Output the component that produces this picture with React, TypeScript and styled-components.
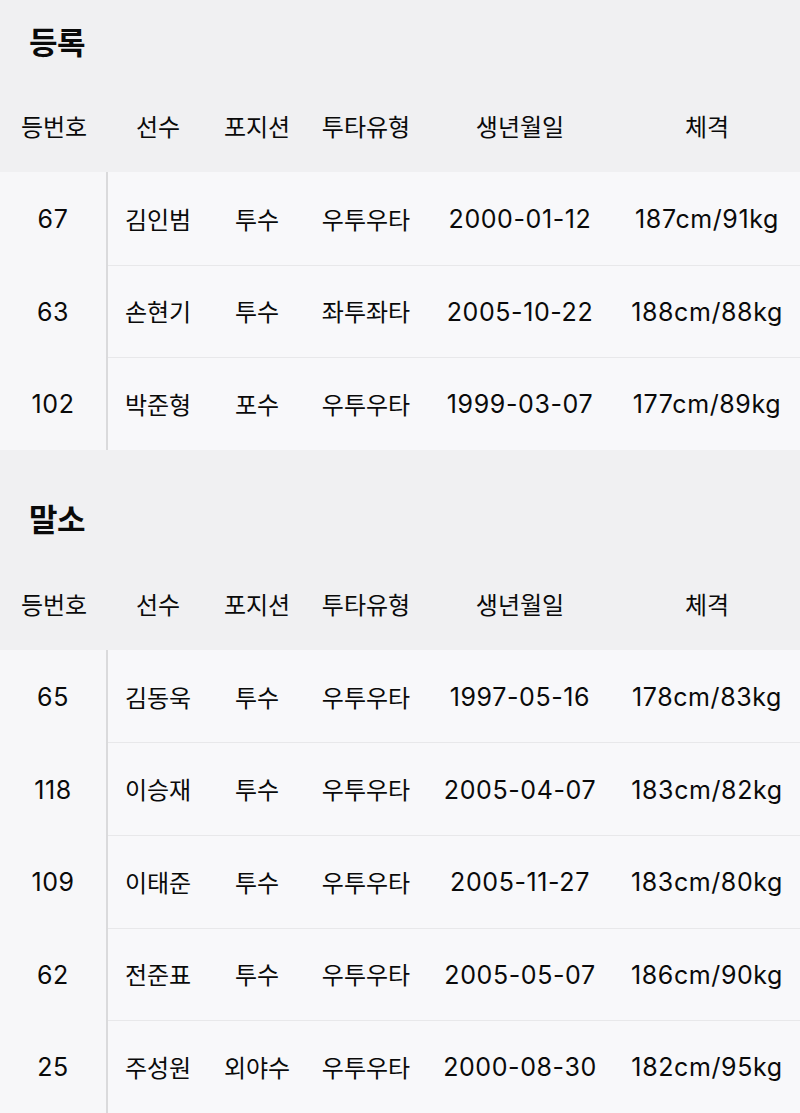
import styled, { createGlobalStyle } from 'styled-components';

const GlobalStyle = createGlobalStyle`
  html, body {
    margin: 0;
    padding: 0;
    background: #f0f0f2;
  }
  body {
    font-family: "Inter", "Noto Sans CJK KR", "Noto Sans", sans-serif;
    color: #0a0a0a;
  }
`;

const COLS = '108px 100px 98px 120px 188px 1fr';

const Section = styled.section<{ $top: number }>`
  background: #f0f0f2;
  padding-top: ${(p) => p.$top}px;
`;

const Title = styled.h2`
  margin: 0;
  height: 60px;
  display: flex;
  align-items: center;
  padding-left: 29px;
  font-size: 31px;
  font-weight: 700;
  letter-spacing: -0.5px;
`;

const HeadRow = styled.div`
  display: grid;
  grid-template-columns: ${COLS};
  box-sizing: border-box;
  height: 102px;
  padding-top: 9px;
  align-items: center;
`;

const HeadCell = styled.div`
  text-align: center;
  font-size: 24px;
  font-weight: 400;
`;

const Body = styled.div`
  background: #f8f8fa;
`;

const Row = styled.div`
  display: grid;
  grid-template-columns: ${COLS};
  height: 92.6px;
  align-items: stretch;
  & + & {
    box-shadow: inset 0 1px 0 #e8e8ea;
  }
`;

const Cell = styled.div<{ $num?: boolean; $latin?: boolean }>`
  display: flex;
  align-items: center;
  justify-content: center;
  font-size: ${(p) => (p.$latin ? '25px' : '24px')};
  font-weight: 400;
  letter-spacing: ${(p) => (p.$latin ? '0.6px' : '0')};
  padding-top: ${(p) => (p.$latin ? '2px' : '0')};
  ${(p) =>
    p.$num &&
    `
    border-right: 2px solid #dadadc;
    background: #f7f7f9;
  `}
`;

type Player = [string, string, string, string, string, string];

const registered: Player[] = [
  ['67', '김인범', '투수', '우투우타', '2000-01-12', '187cm/91kg'],
  ['63', '손현기', '투수', '좌투좌타', '2005-10-22', '188cm/88kg'],
  ['102', '박준형', '포수', '우투우타', '1999-03-07', '177cm/89kg'],
];

const released: Player[] = [
  ['65', '김동욱', '투수', '우투우타', '1997-05-16', '178cm/83kg'],
  ['118', '이승재', '투수', '우투우타', '2005-04-07', '183cm/82kg'],
  ['109', '이태준', '투수', '우투우타', '2005-11-27', '183cm/80kg'],
  ['62', '전준표', '투수', '우투우타', '2005-05-07', '186cm/90kg'],
  ['25', '주성원', '외야수', '우투우타', '2000-08-30', '182cm/95kg'],
];

const heads = ['등번호', '선수', '포지션', '투타유형', '생년월일', '체격'];
const latinCols = [0, 4, 5];

const RosterTable = ({ title, rows, top }: { title: string; rows: Player[]; top: number }) => (
  <>
    <Section $top={top}>
      <Title>{title}</Title>
      <HeadRow>
        {heads.map((h) => (
          <HeadCell key={h}>{h}</HeadCell>
        ))}
      </HeadRow>
    </Section>
    <Body>
      {rows.map((r) => (
        <Row key={r[0]}>
          {r.map((v, i) => (
            <Cell key={i} $num={i === 0} $latin={latinCols.includes(i)}>
              {v}
            </Cell>
          ))}
        </Row>
      ))}
    </Body>
  </>
);

const App = () => (
  <>
    <GlobalStyle />
    <RosterTable title="등록" rows={registered} top={10} />
    <RosterTable title="말소" rows={released} top={38} />
  </>
);

export default App;
